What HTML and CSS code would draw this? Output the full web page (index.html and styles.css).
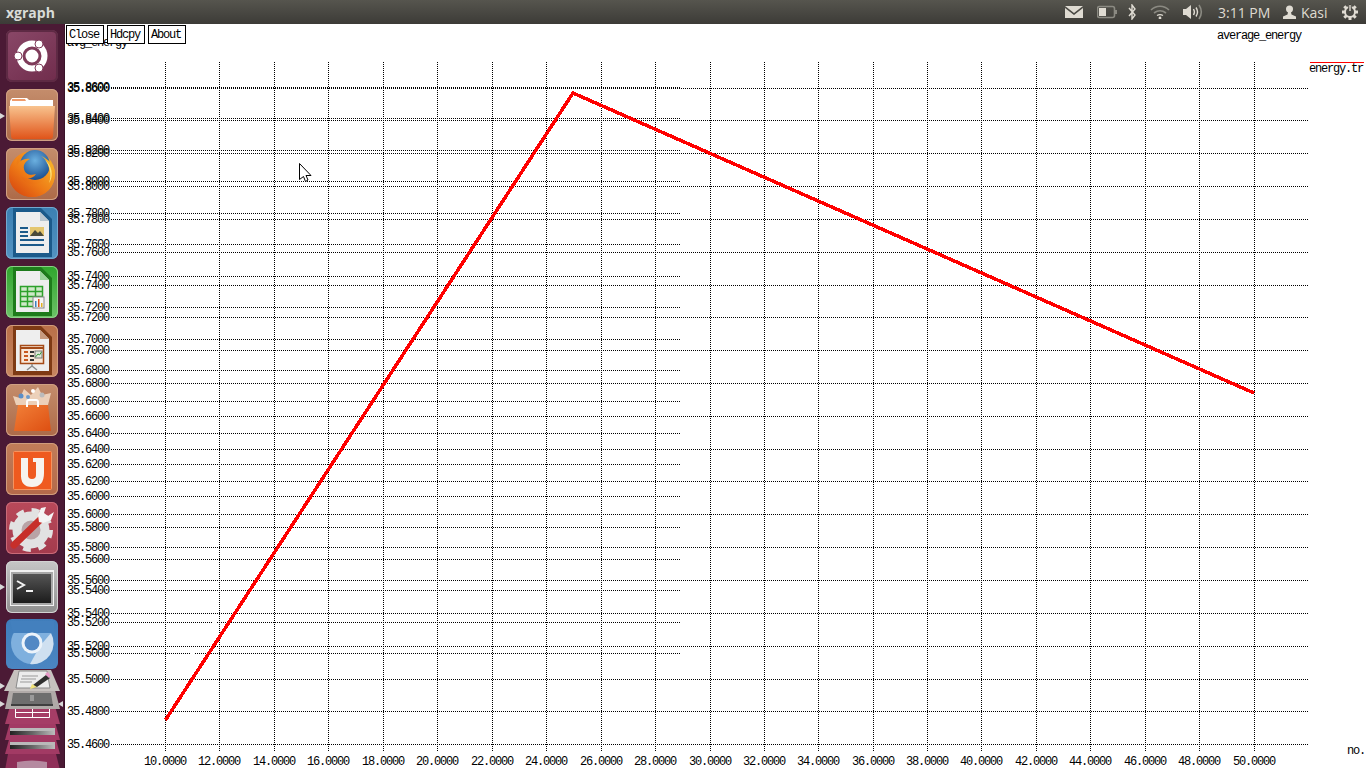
FILE: index.html
```html
<!DOCTYPE html>
<html lang="en">
<head>
<meta charset="utf-8">
<title>xgraph</title>
<link rel="stylesheet" href="styles.css">
</head>
<body>
<div class="screen">
  <header class="topbar">
    <div class="app-title">xgraph</div>
    <div class="indicators">
      <svg class="ind ind-mail" viewBox="0 0 18 12"><path class="ind-fill" d="M0 0H18L9 7ZM0 2V12H18V2L9 9Z"/></svg>
      <svg class="ind ind-battery" viewBox="0 0 20 14"><rect class="ind-dim" x=".5" y="1.5" width="17" height="11" rx="2"/><rect class="ind-fill" x="2" y="3" width="7" height="8"/><rect class="ind-dimfill" x="18" y="5" width="2" height="4"/></svg>
      <svg class="ind ind-bt" viewBox="0 0 9 16"><path class="ind-line" d="M1 4 7 11 4 15V1L7 5 1 12"/></svg>
      <svg class="ind ind-wifi" viewBox="0 0 20 14"><path class="ind-dim" d="M1 5C6 0 14 0 19 5M4 8C8 5 12 5 16 8"/><path class="ind-line" d="M7 10.500C9 9.300 11 9.300 13 10.500"/><circle class="ind-fill" cx="10" cy="13" r="1.400"/></svg>
      <svg class="ind ind-sound" viewBox="0 0 20 16"><path class="ind-fill" d="M0 5H3L8 1V15L3 11H0Z"/><path class="ind-line" d="M10.500 5C11.700 7 11.700 9 10.500 11M13 3.500C15 6.500 15 9.500 13 12.500"/><path class="ind-dim" d="M16 1C19 5.500 19 10.500 16 15"/></svg>
      <span class="clock">3:11 PM</span>
      <svg class="ind ind-user" viewBox="0 0 13 14"><circle class="ind-fill" cx="6.500" cy="4" r="3.500"/><path class="ind-fill" d="M5 7H8L8.500 9.500 13 11.500V14H0V11.500L4.500 9.500Z"/></svg>
      <span class="user">Kasi</span>
      <svg class="ind ind-power" viewBox="0 0 16 16"><circle class="ind-line ind-gear" cx="8" cy="8" r="5"/><path class="ind-cog" d="M8 0V3M8 13V16M0 8H3M13 8H16M2.300 2.300 4.500 4.500M11.500 11.500 13.700 13.700M2.300 13.700 4.500 11.500M11.500 4.500 13.700 2.300"/><path class="ind-cut" d="M8 0V6"/><path class="ind-line" d="M8 1V7"/></svg>
    </div>
  </header>
  <div class="main">
    <nav class="launcher">
      <div class="tile tile-bfb">
        <svg viewBox="0 0 52 52">
          <defs>
            <linearGradient id="g-folder" x1="0" y1="0" x2="0" y2="1"><stop offset="0" stop-color="#f8c38e"/><stop offset="1" stop-color="#e0541a"/></linearGradient>
            <linearGradient id="g-dark" x1="0" y1="0" x2="0" y2="1"><stop offset="0" stop-color="#555"/><stop offset="1" stop-color="#1c1c1c"/></linearGradient>
            <radialGradient id="g-globe" cx=".5" cy=".35" r=".7"><stop offset="0" stop-color="#6bb0e0"/><stop offset="1" stop-color="#14478a"/></radialGradient>
            <linearGradient id="g-fox" x1="1" y1="0" x2="0" y2="1"><stop offset="0" stop-color="#f9c02c"/><stop offset=".55" stop-color="#ee7a16"/><stop offset="1" stop-color="#d23c0e"/></linearGradient>
            <linearGradient id="g-bar" x1="0" y1="0" x2="1" y2="0"><stop offset="0" stop-color="#222"/><stop offset=".5" stop-color="#666"/><stop offset="1" stop-color="#bdbdbd"/></linearGradient>
            <linearGradient id="g-bag" x1="0" y1="0" x2="1" y2="1"><stop offset="0" stop-color="#f28038"/><stop offset="1" stop-color="#dd4f12"/></linearGradient>
          </defs>
          <circle cx="26" cy="26" r="15.500" fill="#fff"/>
          <circle cx="26" cy="26" r="8" fill="none" stroke="#7f3b5a" stroke-width="3"/>
          <circle cx="12" cy="26" r="4" fill="#fff" stroke="#7f3b5a"/>
          <circle cx="33" cy="14" r="4" fill="#fff" stroke="#7f3b5a"/>
          <circle cx="33" cy="38" r="4" fill="#fff" stroke="#7f3b5a"/>
        </svg>
      </div>
      <div class="tile tile-orange tile-active">
        <svg viewBox="0 0 52 52">
          <path d="M4 12 6 9H21L23 11H47V23H4Z" fill="#fff"/>
          <path d="M6 10H19L20 12H6Z" fill="#ef9b6a"/>
          <path d="M3 17H49L47 47Q47 50 44 50H8Q5 50 5 47Z" fill="url(#g-folder)"/>
        </svg>
      </div>
      <div class="tile tile-orange">
        <svg viewBox="0 0 52 52">
          <circle cx="26" cy="26" r="23" fill="url(#g-fox)"/>
          <circle cx="29" cy="17" r="15" fill="url(#g-globe)"/>
          <path d="M35 8C43 13 45 22 41 29 37 35 30 37 25 36 20 35 16 32 15 28 20 32 27 31 30 26 24 28 19 26 18 21 17 16 20 13 24 11 19 10 14 12 11 17 10 14 11 11 13 8 7 12 3 20 3 27 3 40 14 49 26 49 39 49 49 39 49 26 49 18 44 12 35 8Z" fill="url(#g-fox)"/>
          <path d="M39 12C46 17 48 28 43 35 46 27 44 18 39 12Z" fill="#fde27a"/>
        </svg>
      </div>
      <div class="tile tile-blue">
        <svg viewBox="0 0 52 52">
          <path d="M7 1H35L46 12V50H7Z" fill="#1c5a8a"/>
          <path d="M10 5H34L43 14V46H10Z" fill="#eeeeee"/>
          <path d="M34 5V14H43Z" fill="#b9c6d0"/>
          <rect x="24" y="20" width="14" height="9" fill="#e4c66f"/>
          <path d="M24 29 29 23 32 26 34 24 38 29Z" fill="#4a4a3a"/>
          <path class="doc-line" d="M14 21H22M14 25H22M14 29H22M14 33H38M14 38H38"/>
        </svg>
      </div>
      <div class="tile tile-green">
        <svg viewBox="0 0 52 52">
          <path d="M7 1H35L46 12V50H7Z" fill="#1e7b1b"/>
          <path d="M10 5H34L43 14V46H10Z" fill="#eeeeee"/>
          <path d="M34 5V14H43Z" fill="#9bd39a"/>
          <path d="M14.500 20.500H36.500V40.500H14.500ZM14.500 25.500H36.500M14.500 30.500H36.500M14.500 35.500H36.500M21.500 20.500V40.500M29.500 20.500V40.500" fill="#cfe9c8" stroke="#2ca12a" stroke-width="1.500"/>
          <rect x="27" y="31" width="11" height="11" fill="#f4f4f4" stroke="#888"/>
          <path d="M29 35H30.500V41H29Z" fill="#3c80c0"/><path d="M32 33H33.500V41H32Z" fill="#e0541a"/><path d="M35 37H36.500V41H35Z" fill="#e0b020"/>
        </svg>
      </div>
      <div class="tile tile-brown">
        <svg viewBox="0 0 52 52">
          <path d="M7 1H35L46 12V50H7Z" fill="#7e3a14"/>
          <path d="M10 5H34L43 14V46H10Z" fill="#eeeeee"/>
          <path d="M34 5V14H43Z" fill="#c79a7e"/>
          <rect x="14.500" y="20.500" width="23" height="18" fill="#f8e7d8" stroke="#a54a17" stroke-width="1.500"/>
          <path d="M15 23H37" stroke="#a54a17" stroke-width="2"/>
          <path d="M18 27H22M18 31H22M18 35H22" stroke="#c9581f" stroke-width="2"/>
          <path d="M24 27H28M24 31H28M24 35H28" stroke="#333" stroke-width="2"/>
          <rect x="29" y="26" width="7" height="7" fill="#dfe8d8" stroke="#777"/>
          <path d="M29.500 32 32 29 33.500 30 35.500 27" stroke="#3c9a3c" fill="none"/>
          <path d="M26 39V41M26 41 21 45M26 41 31 45" stroke="#8c8c8c" stroke-width="1.500" fill="none"/>
        </svg>
      </div>
      <div class="tile tile-orange">
        <svg viewBox="0 0 52 52">
          <path d="M10 21 7 12 14 14 18 5 25 11 32 3 36 11 45 9 42 21Z" fill="#f8e4cf" opacity=".8"/>
          <circle cx="15" cy="12" r="2.500" fill="#5b8fc8"/><circle cx="27" cy="7" r="2" fill="#fff"/><circle cx="36" cy="11" r="2.500" fill="#bcbcbc"/><circle cx="22" cy="13" r="2" fill="#6d9ccc"/>
          <path d="M12 21H42L45 47H8Z" fill="url(#g-bag)"/>
          <path d="M21 23V18Q21 16 23 16H30Q32 16 32 18V23" fill="none" stroke="#fff" stroke-width="2"/>
        </svg>
      </div>
      <div class="tile tile-u1">
        <svg viewBox="0 0 52 52">
          <rect x="7.500" y="8.500" width="38" height="38" rx="1" fill="#ef5a1f" stroke="#f6935f"/>
          <path d="M15 15H22V32Q22 36 26 36T30 32V19L27 19 27 15H38V30Q38 44 26 44T15 30Z" fill="#f6f3ee"/>
        </svg>
      </div>
      <div class="tile tile-red">
        <svg viewBox="0 0 52 52">
          <circle class="gear-teeth" cx="25" cy="28" r="19"/>
          <circle cx="25" cy="28" r="14" fill="#b9a3a6" stroke="#e2e2e2" stroke-width="9"/>
          <path d="M8 43 35 17" stroke="#c72f2a" stroke-width="7" stroke-linecap="round"/>
          <path d="M35 6 32 13 33 20 37 21 45 18 48 10 42 14 38 11 40 5Z" fill="#f4f4f4"/>
        </svg>
      </div>
      <div class="tile tile-grey tile-active">
        <svg viewBox="0 0 52 52">
          <rect x="4" y="9" width="44" height="36" fill="#f2f2f2"/>
          <rect x="5" y="11" width="42" height="33" fill="#a8a8a8"/>
          <rect x="7" y="13" width="38" height="29" fill="url(#g-dark)"/>
          <path d="M11 20 18 24 11 28" fill="none" stroke="#f2f2f2" stroke-width="2"/>
          <path d="M20 30H27" stroke="#f2f2f2" stroke-width="2"/>
        </svg>
      </div>
      <div class="tile tile-chrome">
        <svg viewBox="0 0 52 52">
          <circle cx="26" cy="24" r="21" fill="#7fb0de"/>
          <path d="M4 2H48V14H30L7 14Z" fill="#4380be"/>
          <path d="M45 14A21 21 0 0 1 24 45L34 27Z" fill="#cfe0f0"/>
          <circle cx="26" cy="24" r="10.500" fill="#ecf3fa"/>
          <circle cx="26" cy="24" r="7.500" fill="#5288c4"/>
        </svg>
      </div>
      <div class="stack">
        <svg class="stack-art" viewBox="0 0 65 100">
          <path d="M8 84H56L60 100H5Z" fill="#8f2f58"/>
          <path d="M17 92Q32 89 47 92V100H17Z" fill="#b58aa0"/>
          <path d="M10 66H55L60 84H5Z" fill="#a23a64"/>
          <path d="M10 72H55V75H10Z" fill="#b9b9b9"/><path d="M10 75H55V79H10Z" fill="url(#g-bar)"/>
          <path d="M10 52H55L60 70H5Z" fill="#a23a64"/>
          <path d="M10 58H55V61H10Z" fill="#b9b9b9"/><path d="M10 61H55V65H10Z" fill="url(#g-bar)"/>
          <path d="M10 36H55L60 54H5Z" fill="#a53d66"/>
          <path d="M15.500 36.500H49.500V47.500H15.500ZM32.500 36.500V47.500M15.500 42.500H49.500" fill="none" stroke="#fff"/>
          <path d="M9 20H55L60 39H5Z" fill="#b0aaa8"/>
          <path d="M13 23H51L53 36H11Z" fill="#6e6e6e"/><path d="M11 34H53V36H11Z" fill="#3f3f3f"/><path d="M30 25H34V31H30Z" fill="#9a9a9a"/>
          <path d="M14 0H51L60 21H4Z" fill="#c6c1be"/>
          <path d="M19 1H47L50 18H16Z" fill="#ececec" stroke="#8a8a8a"/>
          <path d="M22 6H38M21 9H36M20 12H32" stroke="#999"/>
          <path d="M33 15 46 5 50 8 37 17 31 18Z" fill="#2f2f2f"/><path d="M30 19 32 14 37 17Z" fill="#f0e37a"/><path d="M45 4 48 2 51 6 49 8Z" fill="#e79ac8"/>
        </svg>
      </div>
      <svg class="pip pip-folder" viewBox="0 0 5 6"><path d="M0 0 5 3 0 6Z"/></svg>
      <svg class="pip pip-term" viewBox="0 0 5 6"><path d="M0 0 5 3 0 6Z"/></svg>
      <svg class="pip pip-stack1" viewBox="0 0 5 6"><path d="M0 0 5 3 0 6Z"/></svg>
      <svg class="pip pip-stack2" viewBox="0 0 5 6"><path d="M0 0 5 3 0 6Z"/></svg>
      <svg class="pip pip-stack3" viewBox="0 0 5 6"><path d="M5 0 0 3 5 6Z"/></svg>
    </nav>
    <main class="plot">
      <div class="toolbar">
        <button class="xbtn xbtn-close">Close</button>
        <button class="xbtn xbtn-hdcpy">Hdcpy</button>
        <button class="xbtn xbtn-about">About</button>
      </div>
      <svg class="canvas" viewBox="65 24 1301 744">
        <path class="grid" d="M165.500 62V751M219.500 62V751M274.500 62V751M328.500 62V751M383.500 62V751M437.500 62V751M492.500 62V751M546.500 62V751M601.500 62V751M655.500 62V751M710.500 62V751M764.500 62V751M818.500 62V751M873.500 62V751M927.500 62V751M981.500 62V751M1036.500 62V751M1090.500 62V751M1145.500 62V751M1199.500 62V751M1254.500 62V751"/>
        <path class="grid" d="M111 87.500H680M111 118.500H680M111 150.500H680M111 181.500H680M111 213.500H680M111 244.500H680M111 276.500H680M111 307.500H680M111 339.500H680M111 370.500H680M111 401.500H680M111 433.500H680M111 464.500H680M111 496.500H680M111 527.500H680M111 559.500H680M111 590.500H680M111 622.500H213M217 622.500H680M111 653.500H190M195 653.500H680"/>
        <path class="grid" d="M111 88.500H1308M111 120.500H1308M111 153.500H1308M111 186.500H1308M111 219.500H1308M111 252.500H1308M111 285.500H1308M111 317.500H1308M111 350.500H1308M111 383.500H1308M111 416.500H1308M111 449.500H1308M111 481.500H1308M111 514.500H1308M111 547.500H1308M111 580.500H1308M111 613.500H1308M111 646.500H1308M111 679.500H1308M111 711.500H1308M111 744.500H1308"/>
        <g class="ticks">
          <text x="67" y="91">35.8600</text><text x="67" y="122">35.8400</text><text x="67" y="154">35.8200</text><text x="67" y="185">35.8000</text><text x="67" y="217">35.7800</text><text x="67" y="248">35.7600</text><text x="67" y="280">35.7400</text><text x="67" y="311">35.7200</text><text x="67" y="343">35.7000</text><text x="67" y="374">35.6800</text><text x="67" y="405">35.6600</text><text x="67" y="437">35.6400</text><text x="67" y="468">35.6200</text><text x="67" y="500">35.6000</text><text x="67" y="531">35.5800</text><text x="67" y="563">35.5600</text><text x="67" y="594">35.5400</text><text x="67" y="626">35.5200</text><text x="67" y="657">35.5000</text>
          <text x="67" y="92">35.8600</text><text x="67" y="124">35.8400</text><text x="67" y="157">35.8200</text><text x="67" y="190">35.8000</text><text x="67" y="223">35.7800</text><text x="67" y="256">35.7600</text><text x="67" y="289">35.7400</text><text x="67" y="321">35.7200</text><text x="67" y="354">35.7000</text><text x="67" y="387">35.6800</text><text x="67" y="420">35.6600</text><text x="67" y="453">35.6400</text><text x="67" y="485">35.6200</text><text x="67" y="518">35.6000</text><text x="67" y="551">35.5800</text><text x="67" y="584">35.5600</text><text x="67" y="617">35.5400</text><text x="67" y="650">35.5200</text><text x="67" y="683">35.5000</text><text x="67" y="715">35.4800</text><text x="67" y="748">35.4600</text>
        </g>
        <g class="ticks ticks-x">
          <text x="165" y="765">10.0000</text><text x="219" y="765">12.0000</text><text x="274" y="765">14.0000</text><text x="328" y="765">16.0000</text><text x="383" y="765">18.0000</text><text x="437" y="765">20.0000</text><text x="492" y="765">22.0000</text><text x="546" y="765">24.0000</text><text x="601" y="765">26.0000</text><text x="655" y="765">28.0000</text><text x="710" y="765">30.0000</text><text x="764" y="765">32.0000</text><text x="818" y="765">34.0000</text><text x="873" y="765">36.0000</text><text x="927" y="765">38.0000</text><text x="981" y="765">40.0000</text><text x="1036" y="765">42.0000</text><text x="1090" y="765">44.0000</text><text x="1145" y="765">46.0000</text><text x="1199" y="765">48.0000</text><text x="1254" y="765">50.0000</text>
        </g>
        <g class="ticks">
          <text x="67" y="46">avg_energy</text>
          <text x="1217" y="39">average_energy</text>
          <text x="1347" y="754">no.</text>
          <text x="1309" y="72">energy.tr</text>
        </g>
        <path class="legend-line" d="M1310 62.500H1364"/>
        <path class="series" d="M165.500 720 573 93 1254 393"/>
        <path class="cursor" d="M299.500 163.500V179.500L303.500 176.500 305.500 181.500 308 180 306 175.500 311 175.500Z"/>
      </svg>
    </main>
  </div>
</div>
</body>
</html>
```

FILE: styles.css
```css
* { box-sizing: border-box; }
html, body { margin: 0; padding: 0; background: #fff; }
body { width: 1366px; height: 768px; overflow: hidden; }

.screen { width: 1366px; height: 768px; display: flex; flex-direction: column; }

/* Unity top panel */
.topbar {
  height: 24px; flex: none;
  display: flex; align-items: center; justify-content: space-between;
  background: linear-gradient(#56554e, #3c3b37);
  color: #dfdbd2;
  font-family: "Open Sans", "Noto Sans", sans-serif;
}
.app-title { margin-left: 6px; font-size: 14px; font-weight: 700; color: #d9dcd8; }
.indicators { display: flex; align-items: center; margin-right: 8px; }
.clock { margin-left: 15px; width: 52px; font-size: 14px; white-space: nowrap; }
.user { margin-left: 5px; width: 28px; font-size: 14px; }
.ind { display: block; flex: none; }
.ind-fill { fill: #dfdbd2; }
.ind-dimfill { fill: #8b8a82; }
.ind-line { fill: none; stroke: #dfdbd2; stroke-width: 1.4; }
.ind-dim { fill: none; stroke: #8b8a82; stroke-width: 1.6; }
.ind-cog { fill: none; stroke: #dfdbd2; stroke-width: 3; }
.ind-gear { stroke-width: 2; }
.ind-cut { stroke: #46453f; stroke-width: 3.500; }
.ind-mail { width: 18px; height: 12px; }
.ind-battery { width: 20px; height: 14px; margin-left: 14px; }
.ind-bt { width: 9px; height: 16px; margin-left: 11px; }
.ind-wifi { width: 20px; height: 14px; margin-left: 13px; }
.ind-sound { width: 20px; height: 16px; margin-left: 13px; }
.ind-user { width: 13px; height: 14px; margin-left: 13px; }
.ind-power { width: 16px; height: 16px; margin-left: 13px; }

.main { flex: 1; display: flex; min-height: 0; }

/* Unity launcher */
.launcher {
  position: relative;
  width: 65px; flex: none;
  display: flex; flex-direction: column; align-items: flex-start;
  gap: 7px;
  padding: 6px 0 0 6px;
  background: #4b1a35;
  border-right: 1px solid #3a1229;
  overflow: hidden;
}
.tile { width: 52px; height: 52px; flex: none; border-radius: 6px; overflow: hidden; }
.tile svg { display: block; width: 52px; height: 52px; }
.tile-bfb { background: linear-gradient(145deg, #8a4868, #702c4c); box-shadow: inset 0 0 0 2px #5e2a44; }
.tile-orange { background: linear-gradient(#c48d6c, #ad6a48); box-shadow: inset 0 0 0 1px #cfa083; }
.tile-blue { background: linear-gradient(#3b7fb2, #5393c2); box-shadow: inset 0 0 0 1px #74a9cf; }
.tile-green { background: linear-gradient(#2fa52c, #6cc167); box-shadow: inset 0 0 0 1px #8bd086; }
.tile-brown { background: linear-gradient(#b96f48, #c68660); box-shadow: inset 0 0 0 1px #d09c7c; }
.tile-u1 { background: linear-gradient(#c17d59, #b4694a); box-shadow: inset 0 0 0 1px #d09c7c; }
.tile-red { background: linear-gradient(#b9495a, #a43b4d); box-shadow: inset 0 0 0 1px #c96a78; }
.tile-grey { background: linear-gradient(#c6c6c6, #8f8f8f); box-shadow: inset 0 0 0 1px #d2d2d2; }
.tile-chrome { height: 50px; margin-top: -1px; background: linear-gradient(#3f7dbb, #4b86c2); }
.doc-line { fill: none; stroke: #1c5a8a; stroke-width: 2; }
.gear-teeth { fill: none; stroke: #e2e2e2; stroke-width: 6; stroke-dasharray: 7.500 7.420; }

.stack { width: 65px; height: 100px; margin: -6px 0 0 -6px; flex: none; }
.stack-art { display: block; width: 65px; height: 100px; }

.pip { position: absolute; width: 5px; height: 6px; fill: #d8d8d8; }
.pip-folder { left: 0; top: 89px; }
.pip-term { left: 0; top: 560px; }
.pip-stack1 { left: 0; top: 659px; }
.pip-stack2 { left: 0; top: 677px; }
.pip-stack3 { right: 1px; top: 677px; }

/* xgraph window */
.plot { position: relative; flex: 1; min-width: 0; background: #fff; }
.canvas { display: block; width: 1301px; height: 744px; }
.grid { fill: none; stroke: #000; stroke-width: 1; stroke-dasharray: 1 1; shape-rendering: crispEdges; }
.ticks text {
  font-family: "Liberation Mono", "DejaVu Sans Mono", monospace;
  font-size: 12px; letter-spacing: -1.2px; fill: #000;
}
.ticks-x text { text-anchor: middle; }
.legend-line { fill: none; stroke: #f00; stroke-width: 1; shape-rendering: crispEdges; }
.series { fill: none; stroke: #f00; stroke-width: 3.500; stroke-linejoin: miter; shape-rendering: crispEdges; }
.cursor { fill: #fff; stroke: #000; stroke-width: 1; }

.toolbar { position: absolute; left: 1px; top: 1px; display: flex; gap: 3px; z-index: 1; }
.xbtn {
  height: 19px; width: 38px; padding: 2px 2px 0 0; margin: 0;
  background: #fff; border: 1px solid #000; border-radius: 0;
  color: #000;
  font-family: "Liberation Mono", "DejaVu Sans Mono", monospace;
  font-size: 12px; letter-spacing: -1.2px; line-height: 15px;
}
```
